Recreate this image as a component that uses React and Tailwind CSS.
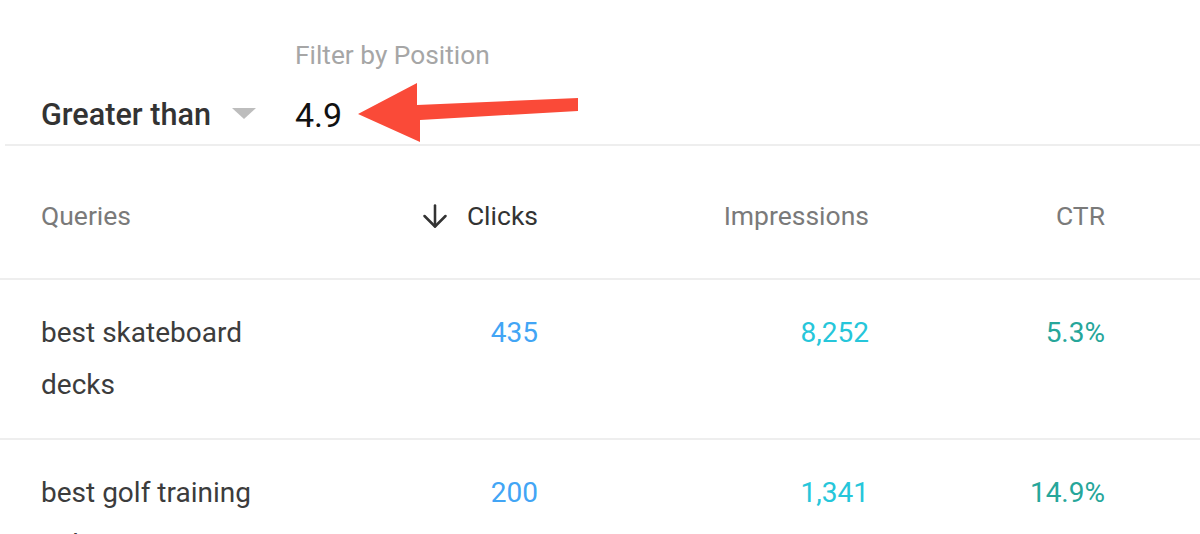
import { ArrowDown } from "lucide-react";

const rows = [
  { query: "best skateboard decks", clicks: "435", impressions: "8,252", ctr: "5.3%" },
  { query: "best golf training aids", clicks: "200", impressions: "1,341", ctr: "14.9%" },
];

export default function App() {
  return (
    <div className="relative h-[534px] w-[1200px] overflow-hidden bg-white font-['Roboto',sans-serif]">
      {/* filter bar */}
      <div className="ml-[5px] flex h-[146px] items-end border-b-2 border-[#eeeeee] pb-[9px]">
        <div className="flex items-center pl-[36px]">
          <span className="text-[30.6px] font-medium leading-[40px] text-[#333333]">Greater than</span>
          <span className="ml-[21px] mt-[-4px] h-0 w-0 border-x-[12px] border-t-[11px] border-x-transparent border-t-[#bdbdbd]" />
        </div>
        <div className="ml-[39px] flex flex-col">
          <span className="text-[26.3px] leading-[30px] text-[#a6a6a6]">Filter by Position</span>
          <span className="mt-[25px] text-[34px] leading-[40px] text-[#111111]">4.9</span>
        </div>
      </div>

      {/* table header */}
      <div className="grid h-[134px] grid-cols-[230px_267px_331px_236px] items-center border-b-2 border-[#eeeeee] pl-[41px] pt-[8px] text-[26.5px] text-[#7a7a7a]">
        <div>Queries</div>
        <div className="flex items-center justify-end gap-[14px] text-[#333333]">
          <ArrowDown size={36} strokeWidth={1.7} className="text-[#333333]" />
          <span>Clicks</span>
        </div>
        <div className="text-right">Impressions</div>
        <div className="text-right">CTR</div>
      </div>

      {/* rows */}
      {rows.map((row) => (
        <div
          key={row.query}
          className="grid grid-cols-[230px_267px_331px_236px] items-start border-b-2 border-[#eeeeee] pb-[27px] pl-[41px] pt-[27px] text-[28px] leading-[52px]"
        >
          <div className="text-[#3c3c3c]">{row.query}</div>
          <div className="text-right text-[#42a5f5]">{row.clicks}</div>
          <div className="text-right text-[#26c6da]">{row.impressions}</div>
          <div className="text-right text-[#26a69a]">{row.ctr}</div>
        </div>
      ))}

      {/* annotation arrow */}
      <svg className="pointer-events-none absolute left-0 top-0" width="1200" height="534">
        <polygon
          points="358,114 417,83 417,105 578,98 578,111 420,120 420,142"
          fill="#fa4a38"
        />
      </svg>
    </div>
  );
}
